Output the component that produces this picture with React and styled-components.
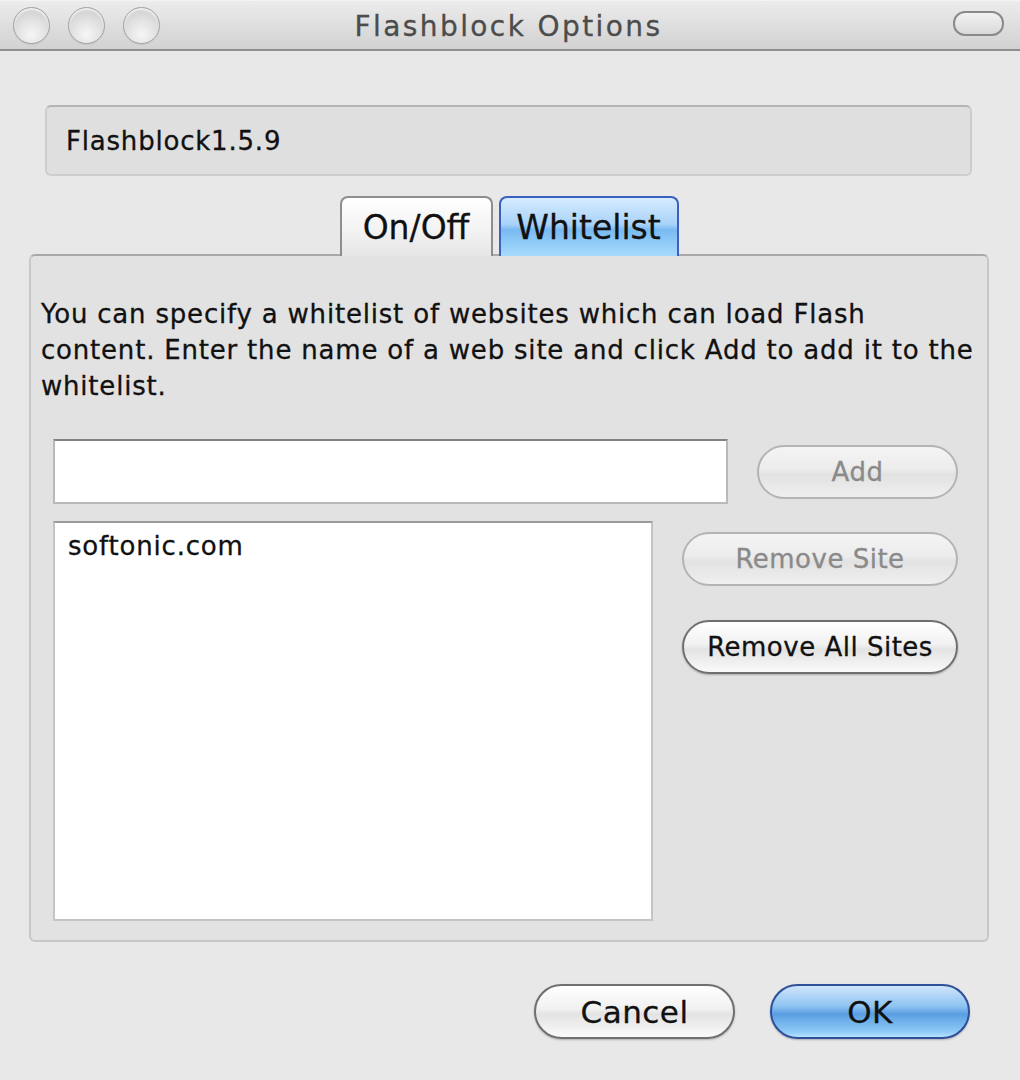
import React from "react";
import styled, { createGlobalStyle, css } from "styled-components";

const GlobalStyle = createGlobalStyle`
  html, body {
    margin: 0;
    padding: 0;
    background: #e8e8e8;
  }
  body {
    font-family: "DejaVu Sans", "Liberation Sans", sans-serif;
    color: #111;
    -webkit-text-stroke: 0.3px currentColor;
  }
`;

const Window = styled.div`
  width: 1020px;
  height: 1080px;
  display: flex;
  flex-direction: column;
  background: #e8e8e8;
  overflow: hidden;
`;

const TitleBar = styled.div`
  height: 48px;
  display: grid;
  grid-template-columns: 1fr auto 1fr;
  align-items: center;
  padding: 0 16px 0 13px;
  background: linear-gradient(#ececec, #dcdcdc 60%, #d2d2d2);
  border-top: 1px solid #f4f4f4;
  border-bottom: 2px solid #8f8f8f;
`;

const Lights = styled.div`
  display: flex;
  gap: 18px;
`;

const Light = styled.span`
  width: 35px;
  height: 35px;
  border-radius: 50%;
  border: 1px solid #a3a3a3;
  background: radial-gradient(circle at 50% 75%, #f6f6f6 0%, #e2e2e2 45%, #c6c6c6 100%);
  box-shadow: inset 0 2px 2px rgba(255, 255, 255, 0.7), 0 1px 1px rgba(0, 0, 0, 0.08);
`;

const Title = styled.div`
  font-size: 28px;
  color: #4c4c4c;
  letter-spacing: 2.4px;
  padding-top: 2px;
`;

const Pill = styled.span`
  justify-self: end;
  width: 47px;
  height: 21px;
  border-radius: 12px;
  border: 2px solid #8a8a8a;
  background: linear-gradient(#f2f2f2, #d9d9d9);
  margin-bottom: 4px;
`;

const Body = styled.div`
  flex: 1;
  display: flex;
  flex-direction: column;
  padding: 54px 31px 0 29px;
`;

const VersionBox = styled.div`
  margin: 0 17px 0 16px;
  height: 67px;
  display: flex;
  align-items: center;
  padding-left: 19px;
  font-size: 26px;
  letter-spacing: 0.8px;
  background: #dfdfdf;
  border: 2px solid #cdcdcd;
  border-top-color: #b4b4b4;
  border-radius: 6px;
`;

const TabRow = styled.div`
  display: flex;
  justify-content: center;
  gap: 6px;
  margin-top: 20px;
  position: relative;
  z-index: 1;
  margin-bottom: -2px;
`;

const Tab = styled.div`
  width: ${(p) => p.$w}px;
  height: 60px;
  box-sizing: border-box;
  display: flex;
  align-items: center;
  justify-content: center;
  font-size: 33px;
  border: 2px solid #8e8e8e;
  border-bottom: none;
  border-radius: 8px 8px 0 0;
  background: linear-gradient(#ffffff, #f4f4f4 50%, #e6e6e6);
  ${(p) =>
    p.$active &&
    css`
      border-color: #3c5fc0;
      background: linear-gradient(#d6ebfd, #a9d3fa 45%, #79baf2 55%, #a8dbfc);
    `}
`;

const Panel = styled.div`
  height: 688px;
  box-sizing: border-box;
  display: flex;
  flex-direction: column;
  padding: 40px 29px 19px 10px;
  background: #e2e2e2;
  border: 2px solid #c7c7c7;
  border-top-color: #a9a9a9;
  border-radius: 6px;
`;

const Description = styled.p`
  margin: 0;
  font-size: 26px;
  letter-spacing: 0.8px;
  line-height: 36px;
  white-space: nowrap;
`;

const InputRow = styled.div`
  display: flex;
  align-items: center;
  justify-content: space-between;
  margin: 35px 0 0 12px;
`;

const TextField = styled.div`
  width: 675px;
  height: 65px;
  box-sizing: border-box;
  background: #fff;
  border: 2px solid #b9b9b9;
  border-top-color: #828282;
`;

const ListRow = styled.div`
  flex: 1;
  display: flex;
  justify-content: space-between;
  margin: 17px 0 0 12px;
`;

const SiteList = styled.div`
  width: 600px;
  box-sizing: border-box;
  background: #fff;
  border: 2px solid #c4c4c4;
  border-top-color: #9a9a9a;
  padding: 8px 0 0 13px;
  font-size: 26px;
  letter-spacing: 0.8px;
`;

const ButtonColumn = styled.div`
  display: flex;
  flex-direction: column;
  gap: 34px;
  padding-top: 11px;
`;

const Button = styled.button`
  width: ${(p) => p.$w}px;
  height: ${(p) => (p.$big ? 55 : 54)}px;
  box-sizing: border-box;
  border-radius: 28px;
  font-family: inherit;
  font-size: ${(p) => (p.$big ? 31 : 26)}px;
  letter-spacing: 0.5px;
  color: #111;
  padding: 0;
  border: 2px solid #6f6f6f;
  background: linear-gradient(#ffffff, #f1f1f1 45%, #e3e3e3 55%, #fafafa);
  box-shadow: 0 1px 2px rgba(0, 0, 0, 0.25);
  ${(p) =>
    p.$disabled &&
    css`
      color: #8a8a8a;
      border-color: #b4b4b4;
      background: linear-gradient(#f4f4f4, #ececec 45%, #e2e2e2 55%, #efefef);
      box-shadow: none;
    `}
  ${(p) =>
    p.$primary &&
    css`
      border-color: #2e4f9a;
      background: linear-gradient(#cfe5fb, #8ec3f2 40%, #5a9ee2 55%, #8fcbf7 90%, #b9e2fd);
    `}
`;

const Footer = styled.div`
  display: flex;
  justify-content: flex-end;
  gap: 35px;
  margin-top: 42px;
  padding-right: 19px;
`;

export default function App() {
  return (
    <Window>
      <GlobalStyle />
      <TitleBar>
        <Lights>
          <Light />
          <Light />
          <Light />
        </Lights>
        <Title>Flashblock Options</Title>
        <Pill />
      </TitleBar>
      <Body>
        <VersionBox>Flashblock1.5.9</VersionBox>
        <TabRow>
          <Tab $w={153}>On/Off</Tab>
          <Tab $w={180} $active>
            Whitelist
          </Tab>
        </TabRow>
        <Panel>
          <Description>
            You can specify a whitelist of websites which can load Flash
            <br />
            content. Enter the name of a web site and click Add to add it to the
            <br />
            whitelist.
          </Description>
          <InputRow>
            <TextField />
            <Button $w={201} $disabled>
              Add
            </Button>
          </InputRow>
          <ListRow>
            <SiteList>softonic.com</SiteList>
            <ButtonColumn>
              <Button $w={276} $disabled>
                Remove Site
              </Button>
              <Button $w={276}>Remove All Sites</Button>
            </ButtonColumn>
          </ListRow>
        </Panel>
        <Footer>
          <Button $w={201} $big>
            Cancel
          </Button>
          <Button $w={200} $big $primary>
            OK
          </Button>
        </Footer>
      </Body>
    </Window>
  );
}
